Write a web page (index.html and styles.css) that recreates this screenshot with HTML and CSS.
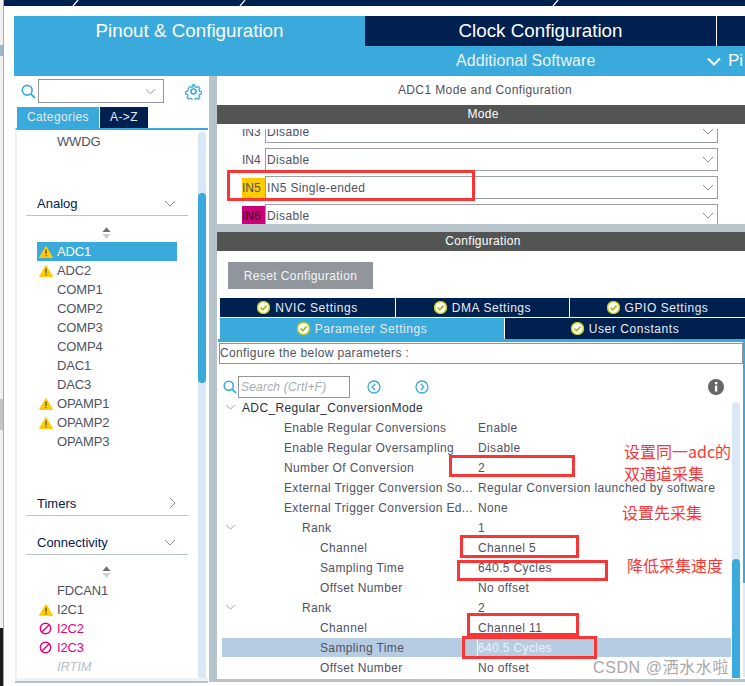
FILE: index.html
```html
<!DOCTYPE html>
<html lang="en">
<head>
<meta charset="utf-8">
<title>ADC1 Mode and Configuration</title>
<link rel="stylesheet" href="styles.css">
</head>
<body>
<svg class="defs" width="0" height="0" aria-hidden="true">
  <symbol id="warn" viewBox="0 0 14 12"><path d="M7 .5 13.6 11.6H.4Z" fill="#ffcc00" stroke="#ffcc00" stroke-linejoin="round"/><path d="M7 3.6V8" stroke="#5a4a00" stroke-width="1.3"/><path d="M7 9v1.3" stroke="#5a4a00" stroke-width="1.3"/></symbol>
  <symbol id="ban" viewBox="0 0 14 14"><circle cx="7" cy="7" r="5.6" fill="none" stroke="#e6007e" stroke-width="1.5"/><path d="M3.2 10.8 10.8 3.2" stroke="#e6007e" stroke-width="1.5"/></symbol>
  <symbol id="ok" viewBox="0 0 14 14"><circle cx="7" cy="7" r="6.4" fill="#fff" stroke="#c5cf1a" stroke-width="1.6"/><path d="M3.9 7 6.2 9.4 10.2 5" fill="none" stroke="#a9b800" stroke-width="1.7"/></symbol>
  <symbol id="down" viewBox="0 0 12 7"><path d="M1 1 6 6 11 1" fill="none" stroke="#8a8f94" stroke-width="1"/></symbol>
  <symbol id="right" viewBox="0 0 7 12"><path d="M1 1 6 6 1 11" fill="none" stroke="#8a8f94" stroke-width="1"/></symbol>
  <symbol id="sort" viewBox="0 0 10 13"><path d="M5 0 9.5 5.5H.5Z" fill="#6b7075"/><path d="M5 13 9.5 7.5H.5Z" fill="#c9cdd0"/></symbol>
  <symbol id="find" viewBox="0 0 15 15"><circle cx="6.2" cy="6.2" r="4.9" fill="none" stroke="#3aa9dc" stroke-width="1.7"/><path d="M9.8 9.8 14 14" stroke="#3aa9dc" stroke-width="1.9"/></symbol>
</svg>

<div class="edge">
  <span class="edge-mark edge-a"></span>
  <span class="edge-mark edge-b"></span>
  <span class="edge-mark edge-c"></span>
</div>

<div class="window">
  <svg class="strip" width="741" height="6" viewBox="0 0 741 6" aria-hidden="true">
    <path d="M69 6 74 0M236 6 241 0M549 6 554 0" stroke="#fff" stroke-width="1.2"/>
  </svg>

  <div class="main">
    <header class="head">
      <div class="head-pinout">Pinout &amp; Configuration</div>
      <div class="head-clock">Clock Configuration</div>
      <div class="head-tools"></div>
      <div class="head-sub">
        <span class="head-soft">Additional Software</span>
        <span class="head-pin">
          <svg class="head-chev" width="14" height="9" viewBox="0 0 14 9"><path d="M1 1.5 7 7.5 13 1.5" fill="none" stroke="#fff" stroke-width="2"/></svg>
          Pi
        </span>
      </div>
    </header>

    <div class="body">
      <aside class="left">
        <div class="left-search">
          <svg class="left-find" width="15" height="15"><use href="#find"/></svg>
          <div class="combo"><svg width="11" height="7"><use href="#down"/></svg></div>
          <svg class="gear" width="17" height="17" viewBox="0 0 24 24">
            <circle cx="12" cy="12" r="3.6" fill="none" stroke="#3aa9dc" stroke-width="2.2"/>
            <path d="M10 1.5h4l.6 3 2.3 1 2.6-1.7 2.8 2.8-1.7 2.6 1 2.3 3 .6v4l-3 .6-1 2.3 1.7 2.6-2.8 2.8-2.6-1.7-2.3 1-.6 3h-4l-.6-3-2.3-1-2.6 1.7-2.8-2.8 1.7-2.6-1-2.3-3-.6v-4l3-.6 1-2.3L3.9 6.6l2.8-2.8 2.6 1.7 2.3-1Z" fill="none" stroke="#3aa9dc" stroke-width="2" stroke-linejoin="round" transform="translate(12 12) scale(.88) translate(-12 -12)"/>
          </svg>
        </div>
        <div class="left-tabs">
          <div class="left-tab on">Categories</div>
          <div class="left-tab">A-&gt;Z</div>
        </div>
        <div class="left-scroll">
          <div class="list">
            <div class="item">WWDG</div>

            <div class="group g-analog">Analog <svg width="12" height="7"><use href="#down"/></svg></div>
            <div class="sort"><svg width="9" height="12"><use href="#sort"/></svg></div>
            <div class="item sel"><svg class="ic" width="14" height="12"><use href="#warn"/></svg>ADC1</div>
            <div class="item"><svg class="ic" width="14" height="12"><use href="#warn"/></svg>ADC2</div>
            <div class="item">COMP1</div>
            <div class="item">COMP2</div>
            <div class="item">COMP3</div>
            <div class="item">COMP4</div>
            <div class="item">DAC1</div>
            <div class="item">DAC3</div>
            <div class="item"><svg class="ic" width="14" height="12"><use href="#warn"/></svg>OPAMP1</div>
            <div class="item"><svg class="ic" width="14" height="12"><use href="#warn"/></svg>OPAMP2</div>
            <div class="item">OPAMP3</div>

            <div class="group g-timers">Timers <svg width="7" height="12"><use href="#right"/></svg></div>
            <div class="group g-conn">Connectivity <svg width="12" height="7"><use href="#down"/></svg></div>
            <div class="sort"><svg width="9" height="12"><use href="#sort"/></svg></div>
            <div class="item">FDCAN1</div>
            <div class="item"><svg class="ic" width="14" height="12"><use href="#warn"/></svg>I2C1</div>
            <div class="item bad"><svg class="ic" width="13" height="13"><use href="#ban"/></svg>I2C2</div>
            <div class="item bad"><svg class="ic" width="13" height="13"><use href="#ban"/></svg>I2C3</div>
            <div class="item off">IRTIM</div>
          </div>
          <div class="bar left-bar"><div class="bar-thumb"></div></div>
        </div>
      </aside>

      <section class="right">
        <div class="title">ADC1 Mode and Configuration</div>
        <div class="band">Mode</div>
        <div class="mode">
          <div class="mode-clip">
            <div class="mode-row"><span class="pin">IN3</span><div class="sel-box">Disable<svg width="12" height="7"><use href="#down"/></svg></div></div>
            <div class="mode-row"><span class="pin">IN4</span><div class="sel-box">Disable<svg width="12" height="7"><use href="#down"/></svg></div></div>
            <div class="mode-row"><span class="pin pin-y">IN5</span><div class="sel-box">IN5 Single-ended<svg width="12" height="7"><use href="#down"/></svg></div></div>
            <div class="mode-row"><span class="pin pin-m">IN6</span><div class="sel-box">Disable<svg width="12" height="7"><use href="#down"/></svg></div></div>
          </div>
        </div>
        <div class="gap"></div>
        <div class="band">Configuration</div>
        <div class="config">
          <div class="reset-wrap"><button class="reset">Reset Configuration</button></div>
          <div class="tabs tabs-a">
            <div class="tab"><svg width="13" height="13"><use href="#ok"/></svg>NVIC Settings</div>
            <div class="tab"><svg width="13" height="13"><use href="#ok"/></svg>DMA Settings</div>
            <div class="tab"><svg width="13" height="13"><use href="#ok"/></svg>GPIO Settings</div>
          </div>
          <div class="tabs tabs-b">
            <div class="tab on"><svg width="13" height="13"><use href="#ok"/></svg>Parameter Settings</div>
            <div class="tab"><svg width="13" height="13"><use href="#ok"/></svg>User Constants</div>
          </div>
          <div class="params">
            <div class="params-main">
              <div class="cfg-box">Configure the below parameters :</div>
              <div class="tools">
                <svg width="14" height="14"><use href="#find"/></svg>
                <div class="search">Search (Crtl+F)</div>
                <svg class="nav nav-prev" width="14" height="14" viewBox="0 0 14 14"><circle cx="7" cy="7" r="6" fill="none" stroke="#3aa9dc" stroke-width="1.3"/><path d="M8.2 4 5.2 7l3 3" fill="none" stroke="#3aa9dc" stroke-width="1.3"/></svg>
                <svg class="nav nav-next" width="14" height="14" viewBox="0 0 14 14"><circle cx="7" cy="7" r="6" fill="none" stroke="#3aa9dc" stroke-width="1.3"/><path d="M5.8 4 8.8 7l-3 3" fill="none" stroke="#3aa9dc" stroke-width="1.3"/></svg>
                <svg class="info" width="16" height="16" viewBox="0 0 16 16"><circle cx="8" cy="8" r="8" fill="#666"/><rect x="6.9" y="6.6" width="2.4" height="6" fill="#fff"/><rect x="6.9" y="3" width="2.4" height="2.3" fill="#fff"/></svg>
              </div>
              <div class="tree-wrap">
                <div class="tree">
                  <div class="row"><span class="cell l0"><svg class="tw" width="11" height="6"><use href="#down"/></svg>ADC_Regular_ConversionMode</span></div>
                  <div class="row"><span class="cell l1">Enable Regular Conversions</span><span class="val">Enable</span></div>
                  <div class="row"><span class="cell l1">Enable Regular Oversampling</span><span class="val">Disable</span></div>
                  <div class="row"><span class="cell l1">Number Of Conversion</span><span class="val">2</span></div>
                  <div class="row"><span class="cell l1">External Trigger Conversion So...</span><span class="val">Regular Conversion launched by software</span></div>
                  <div class="row"><span class="cell l1">External Trigger Conversion Ed...</span><span class="val">None</span></div>
                  <div class="row"><span class="cell l2"><svg class="tw" width="11" height="6"><use href="#down"/></svg>Rank</span><span class="val">1</span></div>
                  <div class="row"><span class="cell l3">Channel</span><span class="val">Channel 5</span></div>
                  <div class="row"><span class="cell l3">Sampling Time</span><span class="val">640.5 Cycles</span></div>
                  <div class="row"><span class="cell l3">Offset Number</span><span class="val">No offset</span></div>
                  <div class="row"><span class="cell l2"><svg class="tw" width="11" height="6"><use href="#down"/></svg>Rank</span><span class="val">2</span></div>
                  <div class="row"><span class="cell l3">Channel</span><span class="val">Channel 11</span></div>
                  <div class="row picked"><span class="cell l3">Sampling Time</span><span class="val">640.5 Cycles</span></div>
                  <div class="row"><span class="cell l3">Offset Number</span><span class="val">No offset</span></div>
                </div>
                <div class="bar tree-bar"><div class="bar-thumb"></div></div>
              </div>
            </div>
            <div class="outer-bar"></div>
          </div>
        </div>
      </section>
    </div>
  </div>
</div>

<div class="mark m-in5"></div>
<div class="mark m-num"></div>
<div class="mark m-ch5"></div>
<div class="mark m-st1"></div>
<div class="mark m-ch11"></div>
<div class="mark m-st2"></div>
<div class="note n-1">设置同一adc的</div>
<div class="note n-2">双通道采集</div>
<div class="note n-3">设置先采集</div>
<div class="note n-4">降低采集速度</div>
<div class="wm">CSDN @洒水水啦</div>
</body>
</html>
```

FILE: styles.css
```css
* { box-sizing: border-box; }
html, body { margin: 0; padding: 0; }
body {
  position: relative;
  display: flex;
  width: 745px;
  height: 686px;
  overflow: hidden;
  background: #fff;
  font-family: "Liberation Sans", Arial, sans-serif;
  font-size: 13px;
  color: #50525f;
}
.defs { position: absolute; }
svg { display: block; flex: none; }

.edge { position: relative; flex: none; width: 4px; background: #f0f0f0; border-right: 1px solid #a9a9a9; }
.edge-mark { position: absolute; left: 0; width: 3px; }
.edge-a { top: 45px; height: 11px; background: #9ab6c8; }
.edge-b { top: 399px; height: 31px; background: #c4c4c4; }
.edge-c { top: 628px; bottom: 0; background: #1b1b1b; }

.window { flex: 1; display: flex; flex-direction: column; min-width: 0; }
.strip { background: #00204f; margin-bottom: 10px; }
.main { margin-left: 10px; display: flex; flex-direction: column; }

.head { display: grid; grid-template-columns: 351px 351px 1fr; grid-template-rows: 30px 30px; color: #fff; font-size: 18.8px; }
.head-pinout { grid-row: 1 / 3; background: #3aa9dc; text-align: center; line-height: 30px; }
.head-clock { background: #00204f; text-align: center; line-height: 30px; }
.head-tools { background: #00204f; border-left: 1px solid #fff; }
.head-sub { grid-column: 2 / 4; background: #3aa9dc; display: flex; line-height: 30px; font-size: 16px; color: #e9f6fc; letter-spacing: .08px; white-space: nowrap; }
.head-soft { margin-left: 91px; flex: none; width: 139px; }
.head-pin { margin-left: 112px; display: flex; align-items: center; gap: 7px; font-size: 17px; letter-spacing: 0; color: #fff; }

.body { display: flex; height: 606px; }
.left { width: 195px; flex: none; display: flex; flex-direction: column; }
.left-search { display: flex; align-items: center; height: 26px; margin-top: 2px; padding-left: 7px; }
.left-find { margin-right: 2px; }
.combo { width: 126px; height: 24px; border: 1px solid #8e959b; display: flex; align-items: center; justify-content: flex-end; padding-right: 7px; flex: none; }
.gear { margin-left: 21px; }
.left-tabs { display: flex; gap: 1px; margin: 3px 0 0 3px; height: 21px; }
.left-tab { background: #00204f; color: #e6ecf2; width: 48px; text-align: center; line-height: 21px; font-size: 12px; letter-spacing: .4px; }
.left-tab.on { background: #3aa9dc; width: 82px; }
.left-scroll { height: 553px; margin-left: 1px; width: 193px; border-top: 2px solid #3aa9dc; border-bottom: 3px solid #eef0f1; border-left: 2px solid #eef0f1; display: flex; box-shadow: 0 2px 0 #b8c4cb; padding-top: 2px; }
.list { flex: 1; min-width: 0; margin-left: -1px; }
.item { display: flex; align-items: center; height: 19px; width: 140px; margin-left: 21px; padding-left: 20px; position: relative; color: #50525f; letter-spacing: -.15px; }
.item .ic { position: absolute; left: 2px; }
.item.sel { background: #3aa9dc; color: #fff; }
.item.bad { color: #e6007e; }
.item.off { color: #b9bfc7; font-style: italic; }
.group { display: flex; justify-content: space-between; align-items: center; width: 162px; height: 25px; margin-left: 10px; padding: 0 12px 0 11px; border-bottom: 1px solid #b8c4cb; color: #00204f; }
.g-analog { margin-top: 40px; }
.g-timers { margin-top: 40px; }
.g-conn { margin-top: 14px; }
.sort { height: 26px; padding: 11px 0 0 76px; width: 162px; margin-left: 10px; }

.bar { flex: none; width: 8px; background: #d9e8f4; border-radius: 4px 4px 0 0; display: flex; flex-direction: column; }
.bar-thumb { background: #3aa9dc; border-radius: 4px 4px 0 0; }
.left-bar { margin-right: 2px; }
.left-bar .bar-thumb { margin-top: 61px; height: 190px; border-radius: 4px; }

.right { margin-left: 8px; flex: 1; min-width: 0; display: flex; flex-direction: column; box-shadow: -8px 0 0 #b8c4cb; border-bottom: 3px solid #b8c4cb; }
.title { height: 29px; line-height: 29px; text-align: center; font-size: 12px; padding-left: 8px; letter-spacing: .4px; }
.band { height: 19px; line-height: 19px; background: #535554; color: #fff; text-align: center; font-size: 12px; letter-spacing: .3px; padding-left: 4px; }
.mode { height: 100px; padding: 5px 0 0 25px; }
.mode-clip { height: 95px; overflow: hidden; }
.mode-row { display: flex; align-items: center; height: 23px; margin-bottom: 5px; }
.mode-row:first-child { margin-top: -9px; }
.pin { width: 23px; height: 20px; line-height: 20px; font-size: 12px; }
.pin-y { background: #ffcc00; }
.pin-m { background: #cc0077; color: #3b0b2a; }
.sel-box { width: 453px; height: 23px; border: 1px solid #9a9fa3; display: flex; align-items: center; justify-content: space-between; padding: 0 3px 0 1px; font-size: 12px; letter-spacing: .35px; }
.gap { height: 8px; background: #b8c4cb; }

.config { flex: 1; min-height: 0; display: flex; flex-direction: column; }
.reset-wrap { padding: 11px 0 9px 11px; }
.reset { display: block; width: 145px; height: 27px; border: 0; background: #90969b; color: #f4f5f6; font: 12px "Liberation Sans", Arial, sans-serif; letter-spacing: .4px; }
.tabs { display: flex; margin-left: 3px; color: #e8edf3; font-size: 12px; letter-spacing: .55px; }
.tab { display: flex; align-items: center; justify-content: center; gap: 5px; background: #00204f; border-left: 1px solid #fff; flex: none; }
.tab:first-child { border-left: 0; }
.tab.on { background: #3aa9dc; }
.tabs-a { height: 19px; margin-bottom: 1px; }
.tabs-a .tab:nth-child(1) { width: 175px; }
.tabs-a .tab:nth-child(2) { width: 174px; }
.tabs-a .tab:nth-child(3) { width: 176px; }
.tabs-b { height: 21px; }
.tabs-b .tab:nth-child(1) { width: 284px; }
.tabs-b .tab:nth-child(2) { width: 241px; }

.params { flex: 1; min-height: 0; display: flex; margin-left: 1px; border-top: 3px solid #3aa9dc; padding-top: 1px; }
.params-main { flex: 1; min-width: 0; padding-left: 1px; }
.outer-bar { flex: none; width: 2px; margin-top: -1px; background: linear-gradient(#3aa9dc 0 241px, #d9e8f4 241px); height: 335px; }
.cfg-box { height: 21px; line-height: 19px; border: 1px solid #8e959b; font-size: 12px; letter-spacing: .37px; width: 524px; }
.tools { display: flex; align-items: center; height: 22px; margin-top: 12px; padding-left: 4px; }
.search { width: 112px; height: 22px; line-height: 20px; border: 1px solid #8e959b; margin-left: 1px; padding-left: 2px; color: #a6acb2; font-style: italic; font-size: 12px; letter-spacing: .2px; flex: none; }
.nav-prev { margin-left: 17px; }
.nav-next { margin-left: 34px; }
.info { margin-left: 279px; }

.tree-wrap { display: flex; margin-top: -1px; height: 281px; }
.tree { width: 509px; margin-left: 3px; flex: none; }
.row { display: grid; grid-template-columns: 256px 1fr; height: 20px; line-height: 22px; white-space: nowrap; font-size: 12px; letter-spacing: .37px; }
.cell { position: relative; display: block; }
.tw { position: absolute; left: 3px; top: 7px; }
.l0 { padding-left: 20px; color: #2b3040; }
.l1 { padding-left: 62px; }
.l2 { padding-left: 80px; }
.l3 { padding-left: 98px; }
.picked { background: #b6cce2; box-shadow: inset 0 1px 0 #fff; }
.picked .val { color: #edf3f9; border-left: 1px solid #fff; margin-left: -1px; }
.tree-bar { margin-left: 1px; margin-top: 5px; justify-content: flex-end; }
.tree-bar .bar-thumb { height: 119px; }

.mark { position: absolute; border: 3px solid #f93636; }
.m-in5 { left: 227px; top: 170px; width: 248px; height: 31px; }
.m-num { left: 449px; top: 455px; width: 126px; height: 22px; }
.m-ch5 { left: 460px; top: 535px; width: 119px; height: 23px; }
.m-st1 { left: 457px; top: 560px; width: 151px; height: 21px; }
.m-ch11 { left: 467px; top: 613px; width: 112px; height: 23px; }
.m-st2 { left: 462px; top: 636px; width: 135px; height: 23px; }

.note { position: absolute; color: #f93636; font-family: "Noto Sans CJK SC", "Liberation Sans", sans-serif; font-size: 16px; line-height: 16px; white-space: nowrap; }
.n-1 { left: 624px; top: 443px; }
.n-2 { left: 624px; top: 465px; }
.n-3 { left: 622px; top: 504px; }
.n-4 { left: 627px; top: 557px; }
.wm { position: absolute; left: 593px; top: 658px; color: #a8a8a8; font-family: "Liberation Sans", "Noto Sans CJK SC", sans-serif; font-size: 16px; line-height: 20px; white-space: nowrap; letter-spacing: .6px; }
```
